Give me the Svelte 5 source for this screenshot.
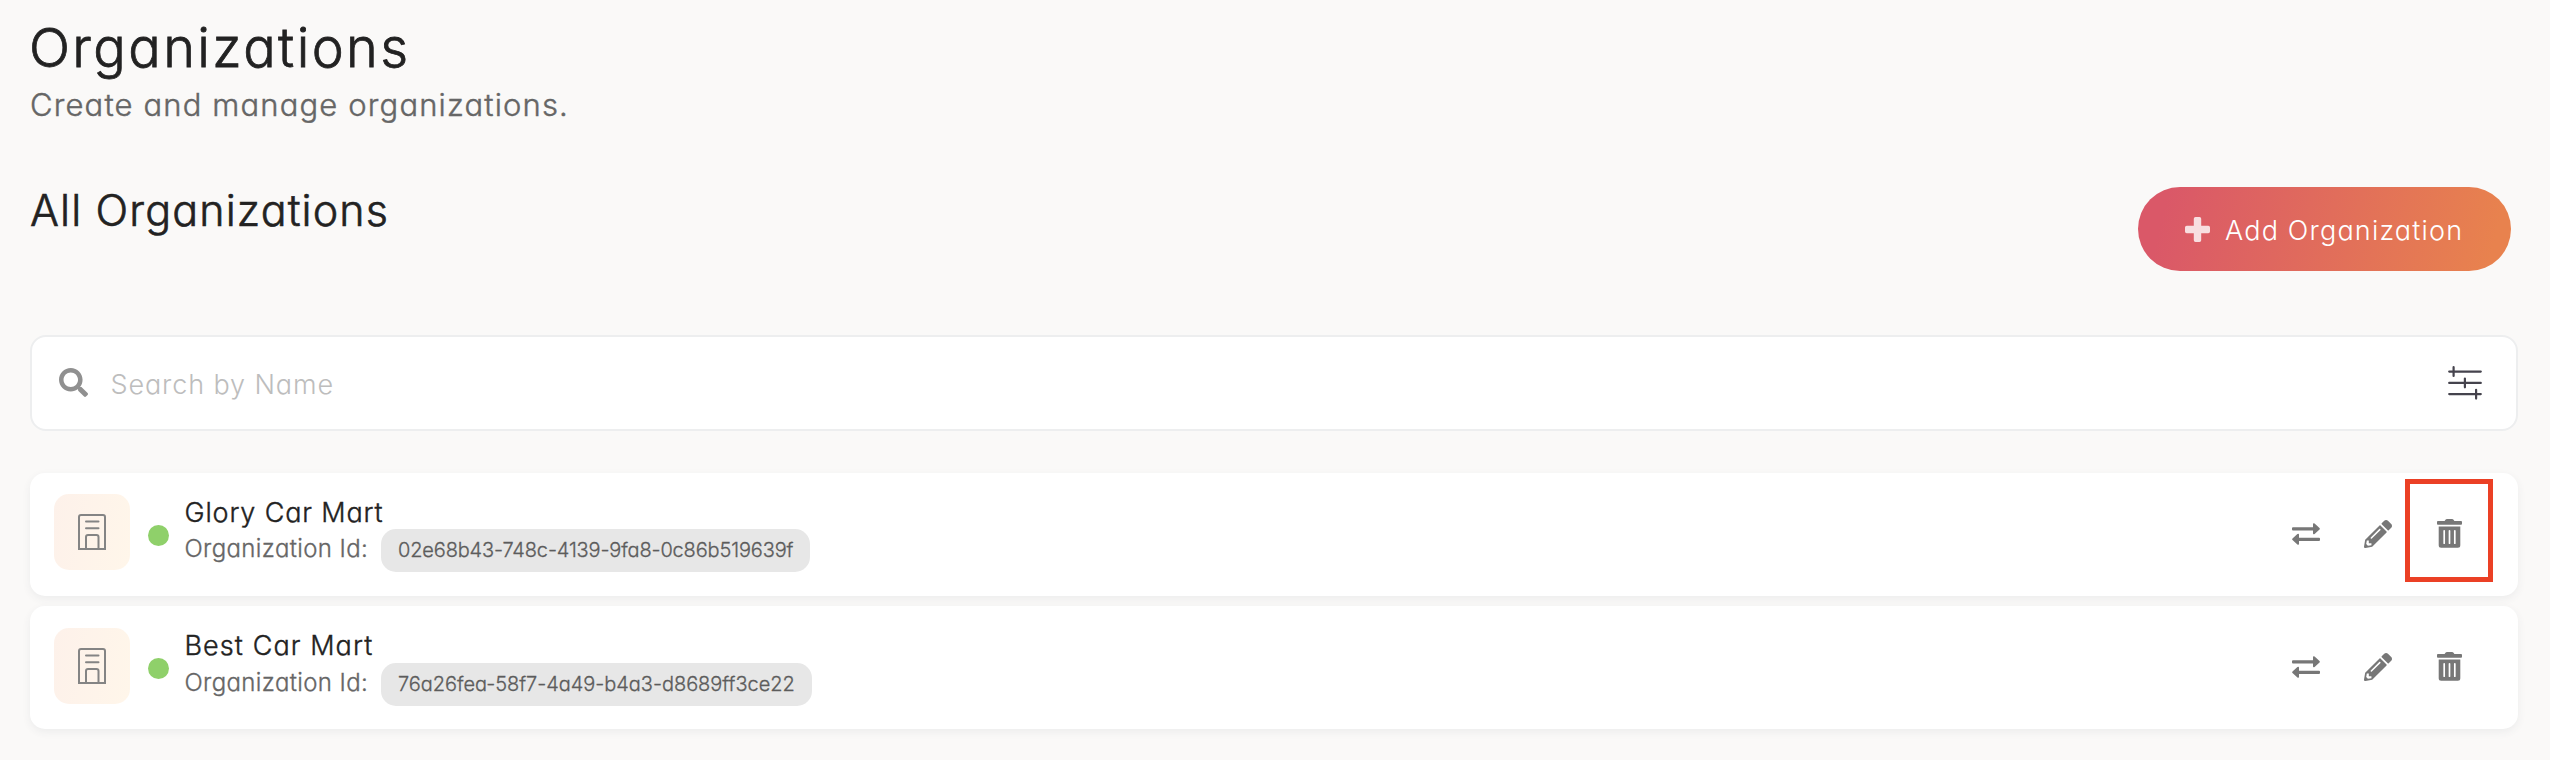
<script>
  const organizations = [
    { name: 'Glory Car Mart', id: '02e68b43-748c-4139-9fa8-0c86b519639f', nameGap: 0.84, idGap: -0.15, marked: true },
    { name: 'Best Car Mart', id: '76a26fea-58f7-4a49-b4a3-d8689ff3ce22', nameGap: 1.08, idGap: -0.04, marked: false }
  ];
</script>

<main>
  <header>
    <h1>Organizations</h1>
    <p>Create and manage organizations.</p>
  </header>

  <section class="bar">
    <h2>All Organizations</h2>
    <button class="add">
      <svg width="25" height="25" viewBox="0 0 25 25"><path d="M10.5 0h4a1.7 1.7 0 0 1 1.7 1.7v7.1h7.1A1.7 1.7 0 0 1 25 10.500v4a1.700 1.700 0 0 1-1.700 1.700h-7.100v7.100a1.700 1.700 0 0 1-1.700 1.700h-4a1.700 1.700 0 0 1-1.700-1.700v-7.100H1.700A1.700 1.700 0 0 1 0 14.500v-4a1.700 1.700 0 0 1 1.700-1.700h7.100V1.700A1.700 1.700 0 0 1 10.500 0z" fill="#fff" fill-opacity=".8" /></svg>
      <span>Add Organization</span>
    </button>
  </section>

  <div class="search">
    <svg class="glass" width="29" height="29" viewBox="0 0 512 512"><path fill="#909090" d="M505 442.700L405.300 343c-4.500-4.500-10.600-7-17-7H372c27.600-35.300 44-79.700 44-128C416 93.100 322.900 0 208 0S0 93.100 0 208s93.100 208 208 208c48.300 0 92.700-16.400 128-44v16.300c0 6.400 2.500 12.500 7 17l99.700 99.700c9.400 9.400 24.600 9.400 33.900 0l28.300-28.300c9.400-9.400 9.400-24.600.1-34zM208 336c-70.700 0-128-57.200-128-128 0-70.700 57.200-128 128-128 70.700 0 128 57.200 128 128 0 70.700-57.200 128-128 128z" /></svg>
    <span class="placeholder">Search by Name</span>
    <svg class="filter" width="34" height="34" viewBox="0 0 34 34" fill="none" stroke="#45434d" stroke-width="2.200" stroke-linecap="round"><path d="M1.200 5.600H32.800M1.200 16.900H32.800M1.200 28.100H32.800M5.600 1.200V10M16.900 12.500V21.300M28.100 23.800V32.600" /></svg>
  </div>

  <div class="list">
    {#each organizations as org}
      <article>
        <div class="tile">
          <svg width="28" height="36" viewBox="0 0 28 36" fill="none" stroke="#848484" stroke-width="2"><path d="M1 35V3Q1 1 3 1H25Q27 1 27 3V35ZM8 35V23Q8 21 10 21H18.500Q20.500 21 20.500 23V35" /><path d="M8 7.600H20.500M8 14.300H20.500" stroke-linecap="round" /></svg>
        </div>
        <i class="dot"></i>
        <div class="info">
          <h3 style="letter-spacing: {org.nameGap}px">{org.name}</h3>
          <div class="meta">
            <span class="label">Organization Id:</span>
            <span class="pill" style="letter-spacing: {org.idGap}px">{org.id}</span>
          </div>
        </div>
        <div class="actions">
          <svg class="swap" width="28" height="22" viewBox="0 0 28 22" fill="#777"><path d="M1 4.200H21V1.300Q21-.6 22.600.6L27.500 5Q28.200 5.800 27.500 6.600L22.600 11Q21 12 21 10.200V7.400H1Q0 7.400 0 6.400V5.200Q0 4.200 1 4.200ZM27 14.700H7V11.800Q7 10 5.400 11.100L.5 15.500Q-.2 16.300.5 17.100L5.400 21.500Q7 22.500 7 20.700V17.900H27Q28 17.900 28 16.900V15.700Q28 14.700 27 14.700Z" /></svg>
          <svg class="pencil" width="28" height="28" viewBox="0 0 512 512" fill="#777"><path d="M497.900 142.100l-46.100 46.100c-4.700 4.700-12.300 4.700-17 0l-111-111c-4.700-4.700-4.700-12.300 0-17l46.100-46.100c18.700-18.700 49.100-18.700 67.900 0l60.100 60.100c18.800 18.700 18.800 49.100 0 68zM284.200 99.800L21.600 362.400.4 483.900c-2.900 16.400 11.400 30.600 27.800 27.800l121.500-21.300 262.600-262.600c4.700-4.700 4.700-12.300 0-17l-111-111c-4.800-4.700-12.400-4.700-17.100 0zM124.100 339.900c-5.500-5.500-5.500-14.300 0-19.800l154-154c5.500-5.500 14.300-5.500 19.800 0s5.500 14.300 0 19.800l-154 154c-5.500 5.500-14.300 5.500-19.800 0zM88 424h48v36.300l-64.500 11.300-31.100-31.100L51.700 376H88v48z" /></svg>
          <svg class="trash" width="25" height="29" viewBox="0 0 25 29" fill="#777"><path fill-rule="evenodd" d="M.9 2H7.600L8.700.6Q9.100 0 9.900 0H15.100Q15.900 0 16.300.6L17.400 2H24.100Q25 2 25 2.900V4.800Q25 5.700 24.100 5.700H.9Q0 5.700 0 4.800V2.900Q0 2 .9 2ZM1.700 7.400H23.300V26.200Q23.300 28.700 20.800 28.700H4.200Q1.700 28.700 1.700 26.200ZM7.200 11A.85.85 0 0 0 6.350 11.850V24.200A.85.85 0 0 0 8.050 24.200V11.850A.85.85 0 0 0 7.200 11ZM12.500 11A.85.85 0 0 0 11.650 11.850V24.200A.85.85 0 0 0 13.350 24.200V11.850A.85.85 0 0 0 12.500 11ZM17.800 11A.85.85 0 0 0 16.950 11.850V24.200A.85.85 0 0 0 18.650 24.200V11.850A.85.85 0 0 0 17.800 11Z" /></svg>
          {#if org.marked}<span class="mark"></span>{/if}
        </div>
      </article>
    {/each}
  </div>
</main>

<style>
  :global(body) { background: #faf9f8; }
  main {
    box-sizing: border-box;
    height: 760px;
    padding: 16px 32px 0 30px;
    overflow: hidden;
    font-family: Inter, sans-serif;
    font-weight: 300;
    font-feature-settings: "cv11";
    color: #222;
    white-space: nowrap;
  }
  h1, h2, h3, p { margin: 0; font-weight: inherit; }
  h1, h2, h3, p, .label, .pill { -webkit-text-stroke: .014em currentColor; }
  h1 { margin-left: -1px; font-size: 54px; line-height: 64px; letter-spacing: 2.4px; }
  p { margin-top: 5px; font-size: 31px; line-height: 40px; letter-spacing: 1.14px; color: #666; }
  .bar { display: flex; justify-content: space-between; margin-top: 59px; }
  h2 { font-size: 43px; line-height: 52px; letter-spacing: 1.12px; }
  .add {
    display: flex;
    align-items: center;
    gap: 15.500px;
    box-sizing: border-box;
    width: 373px;
    height: 84px;
    margin: 3px 7px 0 0;
    padding: 0 0 0 46.500px;
    border: 0;
    border-radius: 42px;
    background: linear-gradient(104deg, #da5868 8%, #e8824e 94%);
    color: #fff;
    font: inherit;
    font-size: 27px;
    font-feature-settings: inherit;
    line-height: 34px;
    letter-spacing: 1.18px;
  }
  .add span { margin-top: 3px; }
  .search {
    display: flex;
    align-items: center;
    box-sizing: border-box;
    height: 96px;
    margin-top: 64px;
    padding: 0 34px 0 27px;
    border: 2px solid #edeeef;
    border-radius: 16px;
    background: #fff;
  }
  .glass { margin-bottom: 2px; }
  .placeholder { flex: 1; margin: 4px 0 0 22.500px; font-size: 27px; line-height: 34px; letter-spacing: .88px; color: #bdbdbd; }
  .list { display: flex; flex-direction: column; gap: 10px; margin-top: 41.800px; }
  article {
    display: flex;
    align-items: flex-start;
    box-sizing: border-box;
    height: 123.300px;
    padding-left: 24px;
    border-radius: 15px;
    background: #fff;
    box-shadow: 0 3px 8px rgba(60, 70, 90, .07);
  }
  .tile {
    display: flex;
    align-items: center;
    justify-content: center;
    width: 76px;
    height: 76px;
    margin-top: 21.600px;
    border-radius: 15px;
    background: linear-gradient(100deg, #fdf1ea, #fff6ea);
  }
  .dot { width: 21px; height: 21px; margin: 52px 0 0 18px; border-radius: 50%; background: #8fd06a; }
  .info { margin: 22.500px 0 0 15.500px; }
  h3 { position: relative; top: .5px; font-size: 27px; line-height: 34px; }
  .meta { display: flex; align-items: flex-start; }
  .label { width: 196.500px; font-size: 24px; line-height: 39px; letter-spacing: .38px; color: #666; }
  .pill { box-sizing: border-box; height: 43px; padding: 0 17px; border-radius: 15px; background: #e7e7e7; font-size: 20px; line-height: 43px; color: #5c5c5c; }
  .actions { position: relative; display: flex; align-items: center; height: 29px; margin: 46.400px 56px 0 auto; }
  .pencil { margin-left: 44px; }
  .trash { margin-left: 45px; }
  .mark { position: absolute; right: -31px; top: -40.200px; box-sizing: border-box; width: 88px; height: 103px; border: 5px solid #eb4025; }
</style>
